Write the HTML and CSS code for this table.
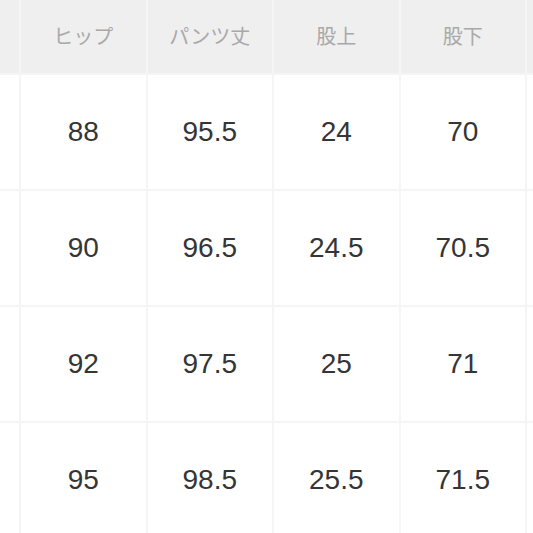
FILE: index.html
```html
<!DOCTYPE html>
<html lang="ja">
<head>
<meta charset="utf-8">
<link rel="stylesheet" href="styles.css">
</head>
<body>
<div class="table">
  <div class="cell head"></div>
  <div class="cell head">ヒップ</div>
  <div class="cell head">パンツ丈</div>
  <div class="cell head">股上</div>
  <div class="cell head">股下</div>
  <div class="cell head"></div>

  <div class="cell"></div>
  <div class="cell">88</div>
  <div class="cell">95.5</div>
  <div class="cell">24</div>
  <div class="cell">70</div>
  <div class="cell"></div>

  <div class="cell"></div>
  <div class="cell">90</div>
  <div class="cell">96.5</div>
  <div class="cell">24.5</div>
  <div class="cell">70.5</div>
  <div class="cell"></div>

  <div class="cell"></div>
  <div class="cell">92</div>
  <div class="cell">97.5</div>
  <div class="cell">25</div>
  <div class="cell">71</div>
  <div class="cell"></div>

  <div class="cell"></div>
  <div class="cell">95</div>
  <div class="cell">98.5</div>
  <div class="cell">25.5</div>
  <div class="cell">71.5</div>
  <div class="cell"></div>
</div>
</body>
</html>
```

FILE: styles.css
```css
html, body {
  margin: 0;
  padding: 0;
  background: #ffffff;
  overflow: hidden;
}

.table {
  display: grid;
  grid-template-columns: 19px repeat(4, 124.5px) 1fr;
  grid-template-rows: 73px repeat(4, 114px);
  gap: 2px;
  background: #f5f5f5;
  width: 533px;
  height: 533px;
  overflow: hidden;
}

.cell {
  background: #ffffff;
  display: flex;
  align-items: center;
  justify-content: center;
  font-family: "Liberation Sans", Arial, sans-serif;
  font-size: 28px;
  color: #353535;
}

.cell.head {
  background: #efefef;
  font-family: "Noto Sans CJK JP", "Liberation Sans", sans-serif;
  font-size: 20px;
  color: #a9a9a9;
  padding-bottom: 2px;
}
```
